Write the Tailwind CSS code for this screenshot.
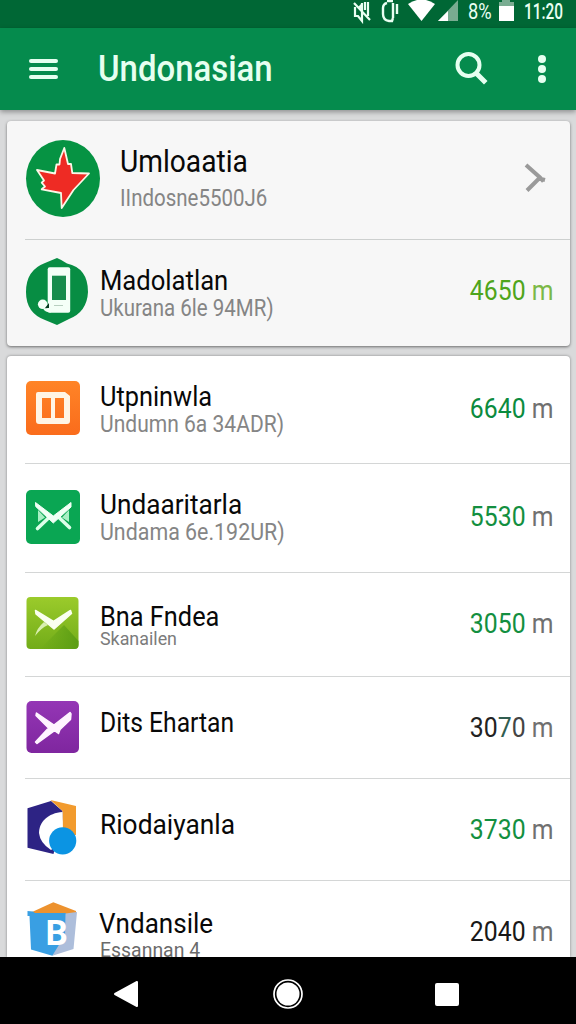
<!DOCTYPE html>
<html lang="id">
<head>
<meta charset="utf-8">
<title>Undonasian</title>
<script src="https://cdn.jsdelivr.net/npm/@tailwindcss/browser@4"></script>
</head>
<body class="flex h-[1024px] w-[576px] flex-col overflow-hidden bg-[#d9dadb] font-[Roboto,sans-serif] leading-none text-[#080808]">

  <!-- Status bar -->
  <div class="flex h-[28px] shrink-0 items-start bg-[#006735] pl-[353px] text-[#e9fff2]">
    <svg class="h-[24px] w-[18px] shrink-0" viewBox="0 0 18 24" fill="none" stroke="currentColor" stroke-width="2.2"><path d="M1 3l16 17M2 7v9h3l4 5V3M12 2v8M15 2v14" /><path d="M5 7l4-4v7z" fill="currentColor" stroke="none"/></svg>
    <svg class="ml-[10px] h-[24px] w-[18px] shrink-0" viewBox="0 0 18 24" fill="none" stroke="currentColor" stroke-width="2.4"><path d="M6 1h6M6 3q-4 1-4 5v6q0 6 6 7h3l1-3M12 3v15M16 4v10"/></svg>
    <svg class="ml-[9px] h-[24px] w-[27px] shrink-0" viewBox="0 0 27 24" fill="#fff"><path d="M0 4Q13.500-5 27 4L13.500 21z"/></svg>
    <svg class="ml-[3px] h-[24px] w-[22px] shrink-0" viewBox="0 0 22 24"><path d="M0 21L20 0V21z" fill="#79ac91"/><path d="M0 21L10 11V21z" fill="#fff"/></svg>
    <span class="ml-[8px] mt-px w-[26px] shrink-0 origin-left scale-x-[.83] whitespace-nowrap text-[22px]">8%</span>
    <svg class="ml-[4px] h-[24px] w-[17px] shrink-0" viewBox="0 0 17 24"><path d="M4 0h8v2h4v5H1V2h3z" fill="#79ac91"/><path d="M1 6h15v15H1z" fill="#fff"/></svg>
    <span class="ml-[9px] mt-px shrink-0 origin-left scale-x-[.7] whitespace-nowrap text-[22px] font-medium">11:20</span>
  </div>

  <!-- App bar -->
  <header class="z-10 flex h-[82px] shrink-0 items-center bg-[#058b4d] pl-[29px] text-[#e6fff0] shadow-[0_2px_5px_rgba(0,0,0,0.35)]">
    <div class="flex w-[29px] flex-col gap-[4.500px]">
      <span class="h-[3.500px] rounded-sm bg-current"></span>
      <span class="h-[3.500px] rounded-sm bg-current"></span>
      <span class="h-[3.500px] rounded-sm bg-current"></span>
    </div>
    <h1 class="ml-[40px] w-[354px] origin-left scale-x-[.915] whitespace-nowrap text-[36px] font-medium">Undonasian</h1>
    <svg class="ml-[3px] h-[36px] w-[34px]" viewBox="0 0 34 36" fill="none" stroke="currentColor"><circle cx="13.500" cy="14" r="11" stroke-width="4"/><path d="M21.500 22.500L29 30" stroke-width="5" stroke-linecap="square"/></svg>
    <div class="ml-[49px] flex flex-col gap-[2.500px]">
      <span class="size-[7.500px] rounded-full bg-current"></span>
      <span class="size-[7.500px] rounded-full bg-current"></span>
      <span class="size-[7.500px] rounded-full bg-current"></span>
    </div>
  </header>

  <main class="flex min-h-0 flex-1 flex-col gap-[10px] pl-[7px] pr-[6px] pt-[11px]">

    <section class="h-[225px] shrink-0 rounded-[4px] bg-[#f7f7f7] pl-[18px] shadow-[0_1px_3px_rgba(0,0,0,0.5)]">
      <div class="flex h-[119px] items-start border-b border-[#cdd0cf]">
        <svg class="mt-[18px] h-[79px] w-[75px]" viewBox="0 0 75 79"><ellipse cx="38" cy="39.500" rx="37" ry="38.500" fill="#069343"/><path d="M39.300 9L35 20 34.500 25.500 31.500 25.500 30 34.500 12 31 19 41.500 16.700 43.700 20 47.500 16.700 50.300 36 54 36.700 69 48.500 51 64 34.500 47.300 34 46 25 43 25z" fill="#ee2b24" stroke="#fbf7e8" stroke-width="1.800" stroke-linejoin="round"/></svg>
        <div class="ml-[20px] mt-[24px] w-[404px] whitespace-nowrap">
          <div class="origin-left scale-x-[.88] text-[32px]">Umloaatia</div>
          <div class="mt-[9px] origin-left scale-x-[.853] text-[24px] text-[#858585]">IIndosne5500J6</div>
        </div>
        <svg class="mt-[42px] h-[30px] w-[22px]" viewBox="0 0 22 30" fill="none" stroke="#9a9a9a" stroke-width="4"><path d="M2 2L16 14.500L19.500 18.500M3 27.500L15 15.500L21 17"/></svg>
      </div>
      <div class="flex h-[106px] items-start">
        <svg class="mt-[18px] h-[68px] w-[63px]" viewBox="0 0 63 68"><path d="M32 0Q37 2 42 5.500Q63 10 63 34Q62 54 44 61L32 67L20 62Q1 55 1 34Q1 12 20 5Z" fill="#078d43"/><rect x="22.700" y="9.300" width="22.500" height="45.500" rx="2" fill="#f4fff7"/><path d="M27 17.700h14V42H27z" fill="#178c4c"/><path d="M29 47.500h9" stroke="#b8cfc0"/><circle cx="17.700" cy="46.300" r="4.800" fill="#f4fff7"/><path d="M20 50l4-5v5z" fill="#063b20"/><path d="M18 50.500q2 4 8 4l-2-4.500z" fill="#f4fff7"/></svg>
        <div class="ml-[12px] mt-[26.500px] w-[282px] whitespace-nowrap">
          <div class="origin-left scale-x-[.915] text-[28px]">Madolatlan</div>
          <div class="mt-[2px] origin-left scale-x-[.892] text-[23px] text-[#858585]">Ukurana 6le 94MR)</div>
        </div>
        <div class="ml-auto mr-[17px] mt-[37px] origin-right scale-x-[.885] whitespace-nowrap text-[28px] text-[#4fa51c]">4650 <span class="text-[#7cb947]">m</span></div>
      </div>
    </section>

    <section class="min-h-0 flex-1 overflow-hidden rounded-t-[4px] bg-white pl-[18px] shadow-[0_0_3px_rgba(0,0,0,0.4)]">
      <div class="flex h-[108px] items-start border-b border-[#d4d6d6]">
        <svg class="ml-[1px] mt-[25px] size-[54px]" viewBox="0 0 54 54"><defs><linearGradient id="or" x2="0" y2="1"><stop stop-color="#ff8427"/><stop offset="1" stop-color="#fa6c1c"/></linearGradient></defs><rect width="54" height="54" rx="5" fill="url(#or)"/><path d="M12 11h27l5 4v25q0 3-3 3H13q-3 0-3-3V13q0-2 2-2zM16 17v20h9V17zM29 17v20h9V17z" fill="#fff5e5" fill-rule="evenodd"/></svg>
        <div class="ml-[20px] mt-[27px] w-[282px] whitespace-nowrap">
          <div class="origin-left scale-x-[.905] text-[28px]">Utpninwla</div>
          <div class="mt-[2px] origin-left scale-x-[.915] text-[23px] text-[#858585]">Undumn 6a 34ADR)</div>
        </div>
        <div class="ml-auto mr-[17px] mt-[39px] origin-right scale-x-[.885] whitespace-nowrap text-[28px] text-[#0b8b3e]">6640 <span class="text-[#707070]">m</span></div>
      </div>

      <div class="flex h-[109px] items-start border-b border-[#d4d6d6]">
        <svg class="ml-[1px] mt-[26px] size-[54px]" viewBox="0 0 54 54"><rect width="54" height="54" rx="5" fill="#0aa653"/><path d="M12 20v12l7-4.500zM43 20v12l-7-4.500z" fill="#a8efc4"/><path d="M22.500 28L11.500 38.500M33 27.500L43.500 37.500" stroke="#dcffe9" stroke-width="3.600" stroke-linecap="round"/><path d="M9.500 12.500L27.300 26 45 12.500V17L27.300 33 9.700 16.500z" fill="#f0fff5" stroke="#f0fff5" stroke-linejoin="round"/></svg>
        <div class="ml-[20px] mt-[27px] w-[282px] whitespace-nowrap">
          <div class="origin-left scale-x-[.935] text-[28px]">Undaaritarla</div>
          <div class="mt-[2px] origin-left scale-x-[.93] text-[23px] text-[#858585]">Undama 6e.192UR)</div>
        </div>
        <div class="ml-auto mr-[17px] mt-[39px] origin-right scale-x-[.885] whitespace-nowrap text-[28px] text-[#138f40]">5530 <span class="text-[#707070]">m</span></div>
      </div>

      <div class="flex h-[104px] items-start border-b border-[#d4d6d6]">
        <svg class="ml-[1px] mt-[24px] h-[52px] w-[54px]" viewBox="0 0 54 52"><defs><linearGradient id="li" x2="0" y2="1"><stop stop-color="#9bcb2b"/><stop offset="1" stop-color="#72ac19"/></linearGradient><linearGradient id="ld"><stop stop-color="#5c9e14" stop-opacity="0"/><stop offset="1" stop-color="#5c9e14"/></linearGradient></defs><rect x=".5" width="52" height="52" rx="4" fill="url(#li)"/><path d="M38 28L52.500 44V48Q52.500 52 48 52H14z" fill="url(#ld)"/><path d="M9 39Q11 31 18 25L22 28Q15 31 9 39z" fill="#d9efb0"/><path d="M9.500 13.500L27.500 24.500 44.500 13.500 45.500 16.500 28 32 10 17z" fill="#fafff0" stroke="#fafff0" stroke-width="1.500" stroke-linejoin="round"/></svg>
        <div class="ml-[20px] mt-[30px] w-[282px] whitespace-nowrap">
          <div class="origin-left scale-x-[.905] text-[28px]">Bna Fndea</div>
          <div class="-mt-[2px] origin-left scale-x-[.94] text-[19px] text-[#7b7b7b]">Skanailen</div>
        </div>
        <div class="ml-auto mr-[17px] mt-[37px] origin-right scale-x-[.885] whitespace-nowrap text-[28px] text-[#138f40]">3050 <span class="text-[#707070]">m</span></div>
      </div>

      <div class="flex h-[102px] items-start border-b border-[#d4d6d6]">
        <svg class="ml-[1px] mt-[24px] h-[52px] w-[54px]" viewBox="0 0 54 52"><defs><linearGradient id="pu" x2="0" y2="1"><stop stop-color="#9436b5"/><stop offset="1" stop-color="#7f269f"/></linearGradient></defs><rect x=".5" width="52.500" height="52" rx="5" fill="url(#pu)"/><path d="M10.500 12L28 24 44 11.500 45 13 44.500 18.500 34 28.500 32.500 32.500 28.500 29.700 11 42.500 9.500 41 22.500 27 10 14.500z" fill="#fff4ff" stroke="#fff4ff" stroke-width="1.500" stroke-linejoin="round"/></svg>
        <div class="ml-[20px] mt-[32px] w-[282px] whitespace-nowrap">
          <div class="origin-left scale-x-[.88] text-[28px]">Dits Ehartan</div>
        </div>
        <div class="ml-auto mr-[17px] mt-[36.500px] origin-right scale-x-[.885] whitespace-nowrap text-[28px] text-[#222]">30<span class="text-[#315d50]">7</span><span class="text-[#444]">0</span> <span class="text-[#707070]">m</span></div>
      </div>

      <div class="flex h-[102px] items-start border-b border-[#d4d6d6]">
        <svg class="ml-[1px] mt-[20px] h-[56px] w-[54px]" viewBox="0 0 54 56"><path d="M1.500 9.300L25 2 36.500 12V20L27.500 55 1.500 48.700z" fill="#2d2384"/><path d="M24.500 1L50 7V36H36.500V12z" fill="#f29b2e"/><path d="M36.500 13C22 14 13 23 13 34Q14 44 25 51L37 42z" fill="#fff"/><circle cx="36.700" cy="41.800" r="13.600" fill="#0b94e3"/></svg>
        <div class="ml-[20px] mt-[32px] w-[282px] whitespace-nowrap">
          <div class="origin-left scale-x-[.94] text-[28px]">Riodaiyanla</div>
        </div>
        <div class="ml-auto mr-[17px] mt-[36.500px] origin-right scale-x-[.885] whitespace-nowrap text-[28px] text-[#138f40]">3730 <span class="text-[#707070]">m</span></div>
      </div>

      <div class="flex h-[102px] items-start">
        <svg class="ml-[1px] mt-[21px] h-[54px] w-[54px]" viewBox="0 0 54 54"><path d="M5 10.500L27.300 .3 50 9V12H5z" fill="#ed922e"/><path d="M1.500 9L7 9.500 9 11H40V42L26.300 53.700 5 47.500 3.500 14H1.500z" fill="#399fe3"/><path d="M39.500 11.500L51 10 47.500 47 26.300 53.700 39 33z" fill="#adbedb"/><text x="19.500" y="42.500" font-family="Roboto" font-weight="700" font-size="35" fill="#fff">B</text></svg>
        <div class="ml-[19px] mt-[28.500px] w-[282px] whitespace-nowrap">
          <div class="origin-left scale-x-[.93] text-[28px]">Vndansile</div>
          <div class="ml-[1px] mt-[2.500px] origin-left scale-x-[.925] text-[21px] text-[#6a6a6a]">Essannan 4</div>
        </div>
        <div class="ml-auto mr-[17px] mt-[37px] origin-right scale-x-[.885] whitespace-nowrap text-[28px] text-[#181818]">2040 <span class="text-[#707070]">m</span></div>
      </div>
    </section>
  </main>

  <!-- Navigation bar -->
  <nav class="z-10 flex h-[67px] shrink-0 items-center bg-black pl-[113px] pt-[7px]">
    <svg class="h-[28px] w-[26px]" viewBox="0 0 26 28"><path d="M2 14L24 2V26z" fill="#fff" stroke="#fff" stroke-width="2" stroke-linejoin="round"/></svg>
    <svg class="ml-[134px] size-[30px]" viewBox="0 0 30 30"><circle cx="15" cy="15" r="14" fill="none" stroke="#fff" stroke-width="1.700"/><circle cx="15" cy="15" r="11.500" fill="#fff"/></svg>
    <span class="ml-[132px] h-[23px] w-[24px] rounded-[2px] bg-white"></span>
  </nav>
</body>
</html>
